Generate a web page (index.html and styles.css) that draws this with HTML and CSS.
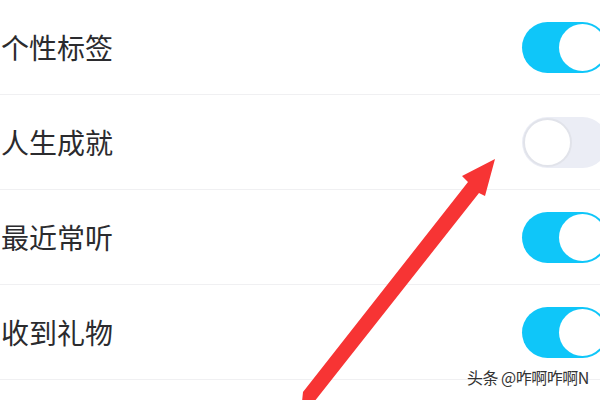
FILE: index.html
```html
<!DOCTYPE html>
<html lang="zh-CN">
<head>
<meta charset="utf-8">
<title>设置</title>
<link rel="stylesheet" href="styles.css">
</head>
<body>
<div class="screen">
  <ul class="list">
    <li class="row"><span class="label">个性标签</span><span class="toggle on"><span class="knob"></span></span></li>
    <li class="row"><span class="label">人生成就</span><span class="toggle off"><span class="knob"></span></span></li>
    <li class="row"><span class="label">最近常听</span><span class="toggle on"><span class="knob"></span></span></li>
    <li class="row"><span class="label">收到礼物</span><span class="toggle on"><span class="knob"></span></span></li>
    <li class="row"></li>
  </ul>
  <svg class="arrow" width="600" height="400" viewBox="0 0 600 400">
    <polygon points="302,402 314,402 479,193 485,196 495,159 462,176 468,182 303,392" fill="#f73434"/>
  </svg>
  <div class="watermark">头条 @咋啊咋啊N</div>
</div>
</body>
</html>
```
FILE: styles.css
```css
html, body {
  margin: 0;
  padding: 0;
  background: #ffffff;
}
.screen {
  position: relative;
  width: 600px;
  height: 400px;
  overflow: hidden;
  background: #ffffff;
  font-family: "Noto Sans CJK SC", "Noto Sans", sans-serif;
}
.list {
  list-style: none;
  margin: 0;
  padding: 0;
}
.row {
  display: flex;
  align-items: center;
  justify-content: space-between;
  height: 94px;
  border-bottom: 1px solid #f0f0f2;
  padding-left: 1px;
}
.label {
  font-size: 28px;
  line-height: 1;
  color: #2b2b2e;
  letter-spacing: 0;
}
.toggle {
  position: relative;
  width: 86px;
  height: 51px;
  border-radius: 26px;
  margin-right: -8px;
  box-sizing: border-box;
}
.toggle.on {
  background: #0fc6f9;
}
.toggle.off {
  background: #ebedf5;
}
.knob {
  position: absolute;
  top: 2px;
  width: 47px;
  height: 47px;
  border-radius: 50%;
  background: #ffffff;
  box-sizing: border-box;
}
.toggle.on .knob {
  right: 2px;
}
.toggle.off .knob {
  left: 1px;
  top: 1px;
  width: 49px;
  height: 49px;
  border: 2px solid #e1e3ea;
}
.arrow {
  position: absolute;
  left: 0;
  top: 0;
}
.watermark {
  position: absolute;
  left: 467px;
  top: 366px;
  font-size: 16px;
  line-height: 22px;
  color: #333333;
  letter-spacing: -0.5px;
  text-shadow: 0 0 2px #ffffff, 0 0 2px #ffffff;
}
```
